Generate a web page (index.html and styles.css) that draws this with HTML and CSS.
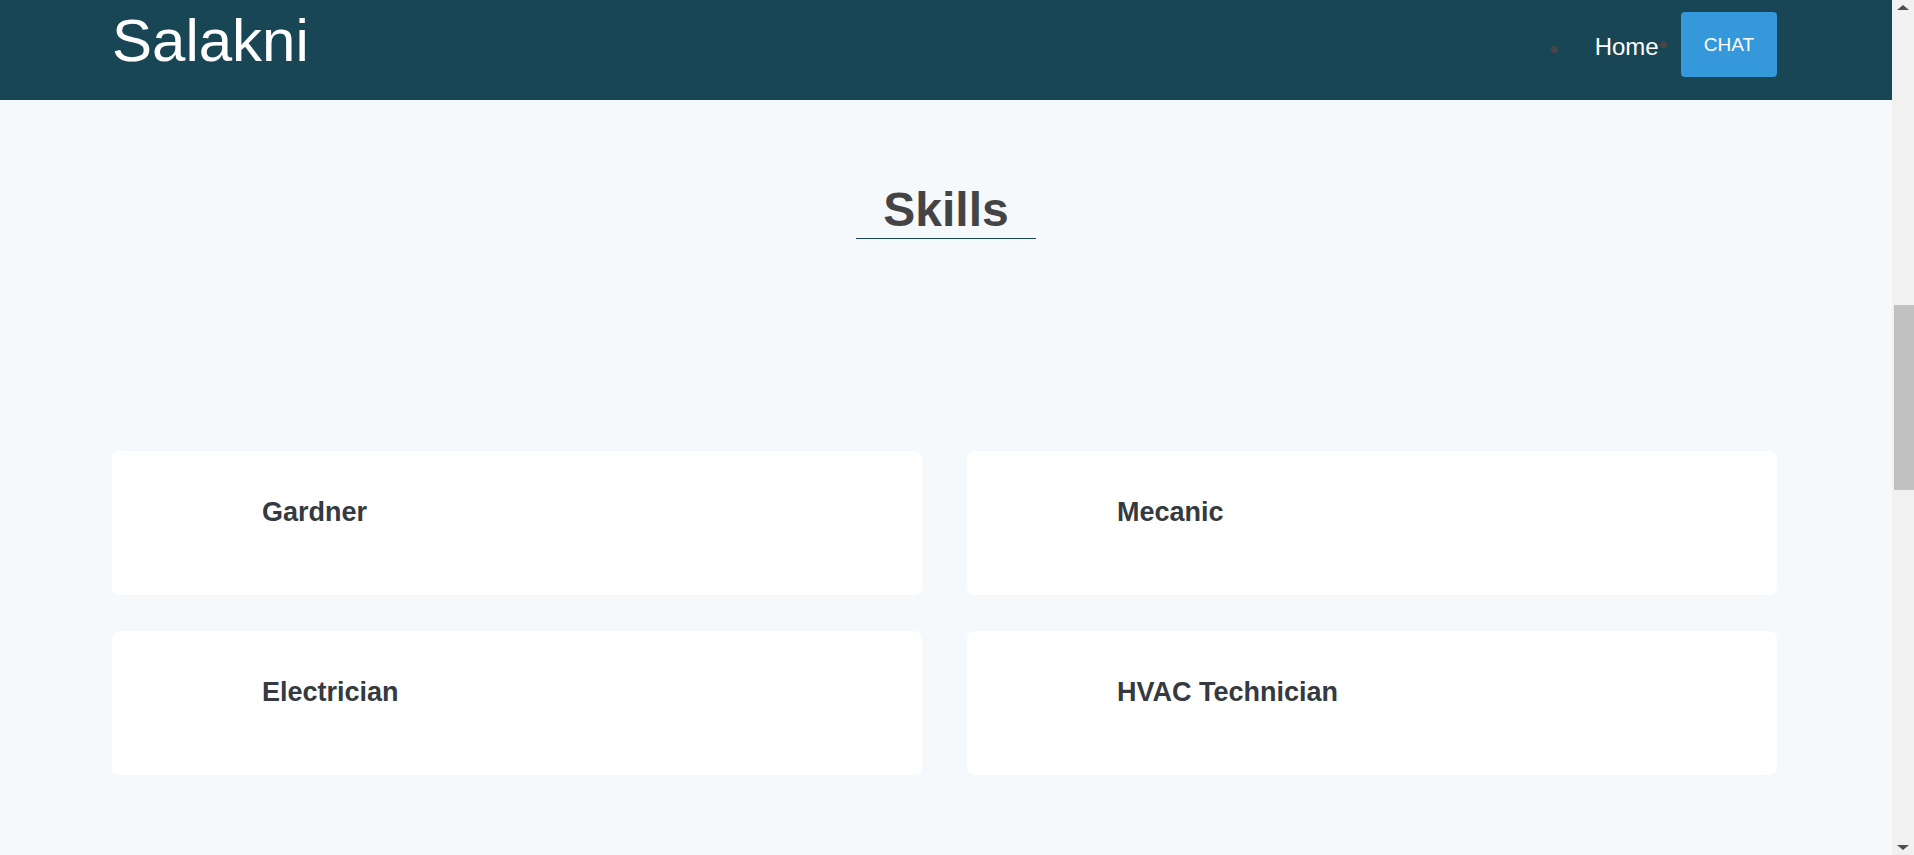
FILE: index.html
```html
<!DOCTYPE html>
<html lang="en">
<head>
<meta charset="utf-8">
<title>Salakni</title>
<link rel="stylesheet" href="styles.css">
</head>
<body>
<div class="page">
  <header class="topbar">
    <div class="container topbar-inner">
      <a class="logo" href="#">Salakni</a>
      <nav class="nav">
        <span class="dot dot-a"></span>
        <a class="nav-link" href="#">Home</a>
        <span class="dot dot-b"></span>
        <a class="chat-btn" href="#">CHAT</a>
      </nav>
    </div>
  </header>
  <main class="skills">
    <h2 class="section-title">Skills</h2>
    <div class="container skill-grid">
      <div class="skill-card"><h3>Gardner</h3></div>
      <div class="skill-card"><h3>Mecanic</h3></div>
      <div class="skill-card"><h3>Electrician</h3></div>
      <div class="skill-card"><h3>HVAC Technician</h3></div>
    </div>
  </main>
</div>
<div class="scrollbar">
  <span class="arrow arrow-up"></span>
  <div class="track"><div class="thumb"></div></div>
  <span class="arrow arrow-down"></span>
</div>
</body>
</html>
```
FILE: styles.css
```css
* { box-sizing: border-box; }
html, body { height: 100%; }
body {
  margin: 0;
  display: flex;
  overflow: hidden;
  font-family: "Liberation Sans", Arial, sans-serif;
  background: #f5f9fc;
}
.page {
  flex: 1;
  min-width: 0;
  background: #f5f9fc;
}
.container {
  margin: 0 115px 0 112px;
}
.topbar {
  height: 100px;
  background: #194654;
}
.topbar-inner {
  display: flex;
  justify-content: space-between;
  align-items: flex-start;
}
.logo {
  color: #fff;
  text-decoration: none;
  font-size: 60px;
  line-height: 60px;
  padding-top: 11px;
}
.nav {
  display: flex;
  align-items: flex-start;
  padding-top: 12px;
}
.dot {
  width: 7px;
  height: 7px;
  border-radius: 50%;
  background: #4a4547;
}
.dot-a { margin-top: 34px; }
.dot-b { margin-top: 29px; margin-left: 1px; }
.nav-link {
  color: #fff;
  text-decoration: none;
  font-size: 24px;
  line-height: 24px;
  margin-top: 23px;
  margin-left: 37px;
}
.chat-btn {
  margin-left: 14px;
  height: 65px;
  padding: 0 23px;
  display: flex;
  align-items: center;
  background: #3498db;
  color: #fff;
  text-decoration: none;
  font-size: 19px;
  border-radius: 4px;
}
.skills {
  padding-top: 86px;
}
.section-title {
  margin: 0;
  text-align: center;
  font-size: 48px;
  line-height: 48px;
  font-weight: 700;
  color: #444;
}
.section-title::after {
  content: "";
  display: block;
  width: 180px;
  height: 1px;
  margin: 4px auto 0;
  background: #194654;
}
.skill-grid {
  margin-top: 212px;
  display: grid;
  grid-template-columns: 1fr 1fr;
  column-gap: 45px;
  row-gap: 36px;
}
.skill-card {
  height: 144px;
  background: #fff;
  border-radius: 8px;
  padding: 46px 0 0 150px;
}
.skill-card h3 {
  margin: 0;
  font-size: 27px;
  line-height: 30px;
  font-weight: 700;
  color: #343a40;
}
.scrollbar {
  width: 22px;
  flex: none;
  background: #f1f1f1;
  display: flex;
  flex-direction: column;
  align-items: center;
}
.arrow {
  width: 0;
  height: 0;
  border-left: 6px solid transparent;
  border-right: 6px solid transparent;
  margin: 5px 0;
}
.arrow-up { border-bottom: 5px solid #505050; }
.arrow-down { border-top: 5px solid #505050; }
.track {
  flex: 1;
  width: 100%;
  padding-left: 2px;
}
.thumb {
  margin-top: 290px;
  height: 185px;
  background: #c1c1c1;
}
```
